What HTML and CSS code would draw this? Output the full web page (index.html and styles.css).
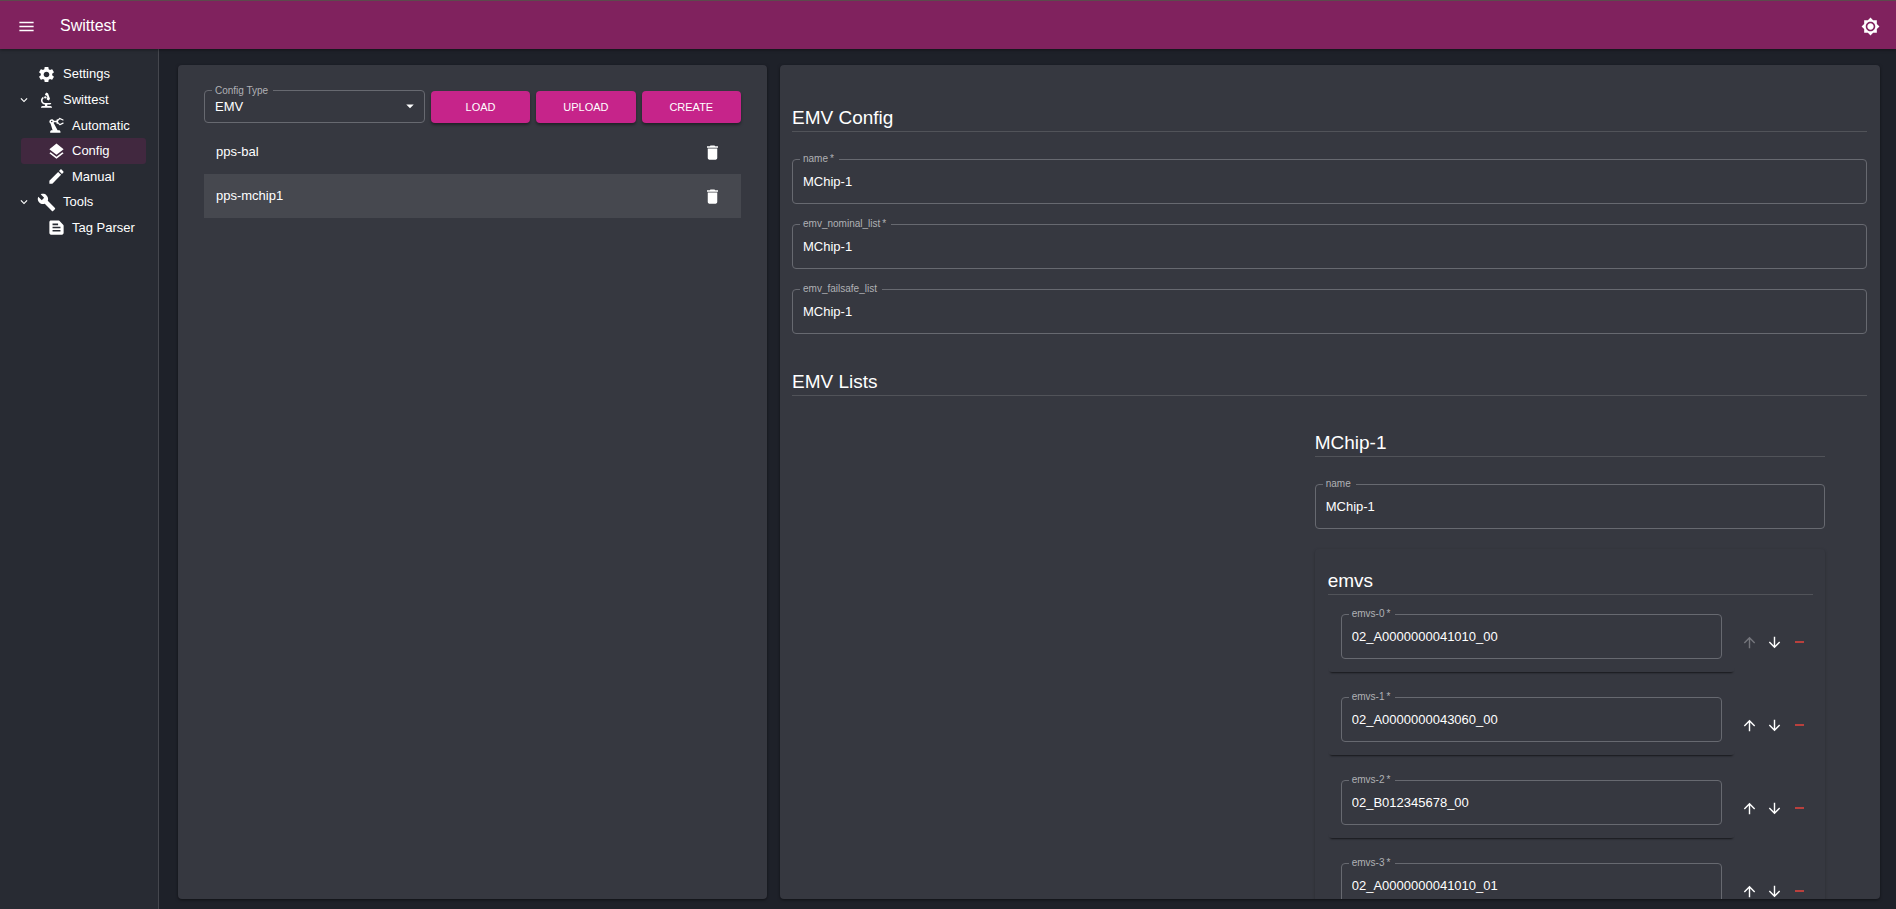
FILE: index.html
```html
<!DOCTYPE html>
<html lang="en">
<head>
<meta charset="utf-8">
<meta name="viewport" content="width=device-width, initial-scale=1.0">
<title>Swittest</title>
<link rel="stylesheet" href="styles.css">
</head>
<body>
<svg class="sprite" aria-hidden="true">
  <symbol id="menu" viewBox="0 0 24 24"><path d="M3 18h18v-2H3v2zm0-5h18v-2H3v2zm0-7v2h18V6H3z"/></symbol>
  <symbol id="sun" viewBox="0 0 24 24"><path d="M20 8.69V4h-4.69L12 .69 8.69 4H4v4.69L.69 12 4 15.31V20h4.69L12 23.31 15.31 20H20v-4.69L23.31 12 20 8.69zM12 18c-3.31 0-6-2.69-6-6s2.69-6 6-6 6 2.69 6 6-2.69 6-6 6zm0-10c-2.21 0-4 1.79-4 4s1.79 4 4 4 4-1.79 4-4-1.79-4-4-4z"/></symbol>
  <symbol id="gear" viewBox="0 0 24 24"><path d="M19.14 12.94c.04-.3.06-.61.06-.94 0-.32-.02-.64-.07-.94l2.03-1.58c.18-.14.23-.41.12-.61l-1.92-3.32c-.12-.22-.37-.29-.59-.22l-2.39.96c-.5-.38-1.03-.7-1.62-.94l-.36-2.54c-.04-.24-.24-.41-.48-.41h-3.84c-.24 0-.43.17-.47.41l-.36 2.54c-.59.24-1.13.57-1.62.94l-2.39-.96c-.22-.08-.47 0-.59.22L2.74 8.87c-.12.21-.08.47.12.61l2.03 1.58c-.05.3-.09.63-.09.94s.02.64.07.94l-2.03 1.58c-.18.14-.23.41-.12.61l1.92 3.32c.12.22.37.29.59.22l2.39-.96c.5.38 1.03.7 1.62.94l.36 2.54c.05.24.24.41.48.41h3.84c.24 0 .44-.17.47-.41l.36-2.54c.59-.24 1.13-.56 1.62-.94l2.39.96c.22.08.47 0 .59-.22l1.92-3.32c.12-.22.07-.47-.12-.61l-2.01-1.58zM12 15.6c-1.98 0-3.6-1.62-3.6-3.6s1.62-3.6 3.6-3.6 3.6 1.62 3.6 3.6-1.62 3.6-3.6 3.6z"/></symbol>
  <symbol id="microscope" viewBox="0 0 24 24"><path d="M7 19c-1.1 0-2 .9-2 2h14c0-1.1-.9-2-2-2h-4v-2h3c1.1 0 2-.9 2-2h-8c-1.66 0-3-1.34-3-3 0-1.09.59-2.04 1.46-2.56C8.17 9.03 8 8.54 8 8c0-.21.04-.42.09-.62C6.28 8.13 5 9.92 5 12c0 2.76 2.24 5 5 5v2H7z"/><path d="M10.56 5.51C11.91 5.54 13 6.64 13 8c0 .75-.33 1.41-.85 1.87l.59 1.62.94-.34.34.94 1.88-.68-.34-.94.94-.34-2.74-7.52-.94.34-.34-.94-1.88.68.34.94-.94.35.56 1.53z"/><circle cx="10.5" cy="8" r="1.5"/></symbol>
  <symbol id="robot-arm" viewBox="0 0 24 24"><path d="M19.93 8.35l-3.6 1.68L14 7.7V6.3l2.33-2.33 3.6 1.68c.38.18.82.01 1-.36.18-.38.01-.82-.36-1l-3.92-1.83c-.38-.18-.83-.1-1.13.2L13.78 4.4C13.6 4.16 13.32 4 13 4c-.55 0-1 .45-1 1v1H8.82C8.4 4.84 7.3 4 6 4 4.34 4 3 5.34 3 7c0 1.1.6 2.05 1.48 2.58L7.08 18H6c-1.1 0-2 .9-2 2v1h13v-1c0-1.1-.9-2-2-2h-1.62L8.41 8.77c.17-.24.31-.49.41-.77H12v1c0 .55.45 1 1 1 .32 0 .6-.16.78-.4l1.74 1.74c.3.3.75.38 1.13.2l3.92-1.83c.38-.18.54-.62.36-1-.18-.37-.62-.54-1-.36zM6 8c-.55 0-1-.45-1-1s.45-1 1-1 1 .45 1 1-.45 1-1 1z"/></symbol>
  <symbol id="layers" viewBox="0 0 24 24"><path d="M11.99 18.54l-7.37-5.73L3 14.07l9 7 9-7-1.63-1.27-7.38 5.74zM12 16l7.36-5.73L21 9l-9-7-9 7 1.63 1.27L12 16z"/></symbol>
  <symbol id="pencil" viewBox="0 0 24 24"><path d="M3 17.25V21h3.75L17.81 9.94l-3.75-3.75L3 17.25zM20.71 7.04c.39-.39.39-1.02 0-1.41l-2.34-2.34c-.39-.39-1.02-.39-1.41 0l-1.83 1.83 3.75 3.75 1.83-1.83z"/></symbol>
  <symbol id="wrench" viewBox="0 0 24 24"><path d="M22.7 19l-9.1-9.1c.9-2.3.4-5-1.5-6.9-2-2-5-2.4-7.4-1.3L9 6 6 9 1.6 4.7C.4 7.1.9 10.1 2.9 12.1c1.9 1.9 4.6 2.4 6.9 1.5l9.1 9.1c.4.4 1 .4 1.4 0l2.3-2.3c.5-.4.5-1.1.1-1.4z"/></symbol>
  <symbol id="snippet" viewBox="0 0 24 24"><path d="M20.41 8.41l-4.83-4.83c-.37-.37-.88-.58-1.41-.58H5c-1.1 0-2 .9-2 2v14c0 1.1.9 2 2 2h14c1.1 0 2-.9 2-2V9.83c0-.53-.21-1.04-.59-1.42zM7 7h7v2H7V7zm10 10H7v-2h10v2zm0-4H7v-2h10v2z"/></symbol>
  <symbol id="chevron" viewBox="0 0 24 24"><path d="M16.59 8.59L12 13.17 7.41 8.59 6 10l6 6 6-6z"/></symbol>
  <symbol id="caret" viewBox="0 0 24 24"><path d="M7 10l5 5 5-5z"/></symbol>
  <symbol id="trash" viewBox="0 0 24 24"><path d="M6 19c0 1.1.9 2 2 2h8c1.1 0 2-.9 2-2V7H6v12zM19 4h-3.5l-1-1h-5l-1 1H5v2h14V4z"/></symbol>
  <symbol id="up" viewBox="0 0 24 24"><path d="M4 12l1.41 1.41L11 7.83V20h2V7.83l5.58 5.59L20 12l-8-8-8 8z"/></symbol>
  <symbol id="down" viewBox="0 0 24 24"><path d="M20 12l-1.41-1.41L13 16.17V4h-2v12.17l-5.58-5.59L4 12l8 8 8-8z"/></symbol>
  <symbol id="minus" viewBox="0 0 24 24"><path d="M19 12.7H5V9.9h14v2.8z" shape-rendering="crispEdges"/></symbol>
</svg>

<header class="topbar">
  <button class="icon-btn" aria-label="Menu"><svg class="icon"><use href="#menu"/></svg></button>
  <h1 class="brand">Swittest</h1>
  <button class="icon-btn" aria-label="Toggle theme"><svg class="icon"><use href="#sun"/></svg></button>
</header>

<div class="layout">
  <nav class="sidebar">
    <ul class="tree">
      <li><a class="node" href="#settings"><span class="toggle"></span><svg class="icon"><use href="#gear"/></svg>Settings</a></li>
      <li>
        <button class="node" aria-expanded="true"><span class="toggle"><svg><use href="#chevron"/></svg></span><svg class="icon"><use href="#microscope"/></svg>Swittest</button>
        <ul class="branch">
          <li><a class="node" href="#automatic"><span class="toggle"></span><svg class="icon"><use href="#robot-arm"/></svg>Automatic</a></li>
          <li><a class="node selected" href="#config" aria-current="page"><span class="toggle"></span><svg class="icon"><use href="#layers"/></svg>Config</a></li>
          <li><a class="node" href="#manual"><span class="toggle"></span><svg class="icon"><use href="#pencil"/></svg>Manual</a></li>
        </ul>
      </li>
      <li>
        <button class="node" aria-expanded="true"><span class="toggle"><svg><use href="#chevron"/></svg></span><svg class="icon"><use href="#wrench"/></svg>Tools</button>
        <ul class="branch">
          <li><a class="node" href="#tag-parser"><span class="toggle"></span><svg class="icon"><use href="#snippet"/></svg>Tag Parser</a></li>
        </ul>
      </li>
    </ul>
  </nav>

  <main class="content">
    <section class="panel picker">
      <div class="toolbar">
        <div class="field">
          <label for="config_type">Config Type</label>
          <select id="config_type"><option>EMV</option></select>
          <svg class="caret"><use href="#caret"/></svg>
        </div>
        <button class="btn">LOAD</button>
        <button class="btn">UPLOAD</button>
        <button class="btn">CREATE</button>
      </div>
      <ul class="configs">
        <li>pps-bal <button class="icon-btn" aria-label="Delete pps-bal"><svg class="icon"><use href="#trash"/></svg></button></li>
        <li class="active">pps-mchip1 <button class="icon-btn" aria-label="Delete pps-mchip1"><svg class="icon"><use href="#trash"/></svg></button></li>
      </ul>
    </section>

    <form class="panel editor">
      <h2>EMV Config</h2>
      <div class="fields">
        <div class="field"><label for="name">name&thinsp;*</label><input id="name" type="text" value="MChip-1"></div>
        <div class="field"><label for="nominal">emv_nominal_list&thinsp;*</label><input id="nominal" type="text" value="MChip-1"></div>
        <div class="field"><label for="failsafe">emv_failsafe_list</label><input id="failsafe" type="text" value="MChip-1"></div>
      </div>

      <h2>EMV Lists</h2>
      <div class="lists">
        <div class="list">
          <h2>MChip-1</h2>
          <div class="fields">
            <div class="field"><label for="list_name">name</label><input id="list_name" type="text" value="MChip-1"></div>
          </div>
          <div class="emvs">
            <h3>emvs</h3>
            <div class="emv">
              <div class="card"><div class="field"><label for="emvs_0">emvs-0&thinsp;*</label><input id="emvs_0" type="text" value="02_A0000000041010_00"></div></div>
              <div class="actions">
                <button type="button" aria-label="Move up" disabled><svg><use href="#up"/></svg></button>
                <button type="button" aria-label="Move down"><svg><use href="#down"/></svg></button>
                <button type="button" aria-label="Remove" class="remove"><svg><use href="#minus"/></svg></button>
              </div>
            </div>
            <div class="emv">
              <div class="card"><div class="field"><label for="emvs_1">emvs-1&thinsp;*</label><input id="emvs_1" type="text" value="02_A0000000043060_00"></div></div>
              <div class="actions">
                <button type="button" aria-label="Move up"><svg><use href="#up"/></svg></button>
                <button type="button" aria-label="Move down"><svg><use href="#down"/></svg></button>
                <button type="button" aria-label="Remove" class="remove"><svg><use href="#minus"/></svg></button>
              </div>
            </div>
            <div class="emv">
              <div class="card"><div class="field"><label for="emvs_2">emvs-2&thinsp;*</label><input id="emvs_2" type="text" value="02_B012345678_00"></div></div>
              <div class="actions">
                <button type="button" aria-label="Move up"><svg><use href="#up"/></svg></button>
                <button type="button" aria-label="Move down"><svg><use href="#down"/></svg></button>
                <button type="button" aria-label="Remove" class="remove"><svg><use href="#minus"/></svg></button>
              </div>
            </div>
            <div class="emv">
              <div class="card"><div class="field"><label for="emvs_3">emvs-3&thinsp;*</label><input id="emvs_3" type="text" value="02_A0000000041010_01"></div></div>
              <div class="actions">
                <button type="button" aria-label="Move up"><svg><use href="#up"/></svg></button>
                <button type="button" aria-label="Move down"><svg><use href="#down"/></svg></button>
                <button type="button" aria-label="Remove" class="remove"><svg><use href="#minus"/></svg></button>
              </div>
            </div>
          </div>
        </div>
      </div>
    </form>
  </main>
</div>
</body>
</html>
```

FILE: styles.css
```css
* { box-sizing: border-box; }
body {
  margin: 0;
  height: 100vh;
  display: flex;
  flex-direction: column;
  background: #1e2129;
  color: #fff;
  font: 13px/18px "Liberation Sans", Arial, sans-serif;
  overflow: hidden;
}
ul { list-style: none; margin: 0; padding: 0; }
button, input, select { font: inherit; color: inherit; }
button { background: none; border: 0; padding: 0; cursor: pointer; }
svg { fill: currentColor; display: block; flex: none; }
.sprite { display: none; }
.icon { width: 19px; height: 19px; }

.topbar {
  position: relative;
  display: flex;
  align-items: center;
  padding: 2px 16px 0 17px;
  height: 49px;
  flex: none;
  border-top: 1px solid #5c4a4c;
  background: #80225e;
  box-shadow: 0 1px 3px rgba(0, 0, 0, .4);
}
.brand {
  flex: 1;
  margin: 0 0 0 24px;
  font-size: 16px;
  font-weight: normal;
}

.layout { flex: 1; display: flex; min-height: 0; }
.sidebar {
  flex: none;
  width: 159px;
  padding: 12px 12px 0 11px;
  border-right: 1px solid #45474e;
  background: #282b33;
}
.node {
  display: flex;
  align-items: center;
  width: 100%;
  height: 26px;
  border-radius: 3px;
  color: inherit;
  text-decoration: none;
}
.node .icon { margin-right: 7px; }
.branch { padding-left: 10px; }
.branch .node { height: 25px; }
.branch .selected { height: 26px; background: #41283f; }
.branch .icon { margin-right: 6px; }
.toggle { width: 26px; flex: none; }
.toggle svg { width: 14px; height: 14px; margin: 0 auto; }

.content {
  flex: 1;
  display: grid;
  grid-template-columns: 589fr 1100fr;
  gap: 13px;
  min-width: 0;
  padding: 16px 16px 10px 19px;
}
.panel {
  min-height: 0;
  overflow: hidden;
  border-radius: 4px;
  background: #363840;
  box-shadow: 0 1px 3px rgba(0, 0, 0, .5);
}
.picker { padding: 25px 26px; }
.editor { padding: 0 13px 0 12px; }

.toolbar {
  display: grid;
  grid-template-columns: 20fr 9fr 9fr 9fr;
  align-items: center;
  gap: 6px;
}
.btn {
  height: 32px;
  border-radius: 4px;
  background: #c6248a;
  box-shadow: 0 2px 3px rgba(0, 0, 0, .4);
  font-size: 11px;
}

/* outlined field, the label sits on the top border */
.field { position: relative; }
.field label {
  position: absolute;
  left: 8px;
  top: -6px;
  padding: 0 5px 0 3px;
  background: #363840;
  color: #b0b1b5;
  font-size: 10px;
  line-height: 12px;
}
.toolbar label { top: -5px; }
.field input, .field select {
  display: block;
  width: 100%;
  height: 45px;
  padding: 0 10px;
  border: 1px solid #676970;
  border-radius: 4px;
  background: none;
  appearance: none;
  outline: none;
}
.field select { height: 33px; }
.field select option { background: #363840; }
.caret {
  position: absolute;
  right: 6px;
  top: 7px;
  width: 18px;
  height: 18px;
  pointer-events: none;
}

.configs { margin-top: 7px; }
.configs li {
  display: flex;
  align-items: center;
  justify-content: space-between;
  height: 44px;
  padding: 0 19px 0 12px;
}
.configs .active { background: #46484f; }

h2, h3 {
  margin: 0;
  border-bottom: 1px solid #515359;
  font-size: 19px;
  font-weight: normal;
  line-height: 26px;
}
h2 { padding-top: 40px; }
h2 + .fields { padding-top: 27px; }
.fields { display: grid; gap: 20px; }
.fields + h2 { padding-top: 35px; }

.lists { display: flex; justify-content: flex-end; padding-right: 42px; }
.list { width: 49.4%; }
.list > h2 { padding-top: 34px; }
.emvs {
  margin-top: 20px;
  padding: 19px 12px 20px 13px;
  border-radius: 4px;
  box-shadow: 0 1px 3px rgba(0, 0, 0, .25);
}
.emvs h3 { margin-bottom: 6px; }
.emv { display: flex; align-items: center; }
.card {
  flex: 1;
  margin-bottom: 12px;
  padding: 13px;
  border-radius: 4px;
  box-shadow: 0 3px 2px -2px rgba(0, 0, 0, .6);
}
.actions { display: flex; gap: 8px; padding: 0 5px 0 6px; }
.actions svg { width: 17px; height: 17px; }
.actions :disabled { color: #75767c; }
.actions .remove { color: #b9403d; }
```
